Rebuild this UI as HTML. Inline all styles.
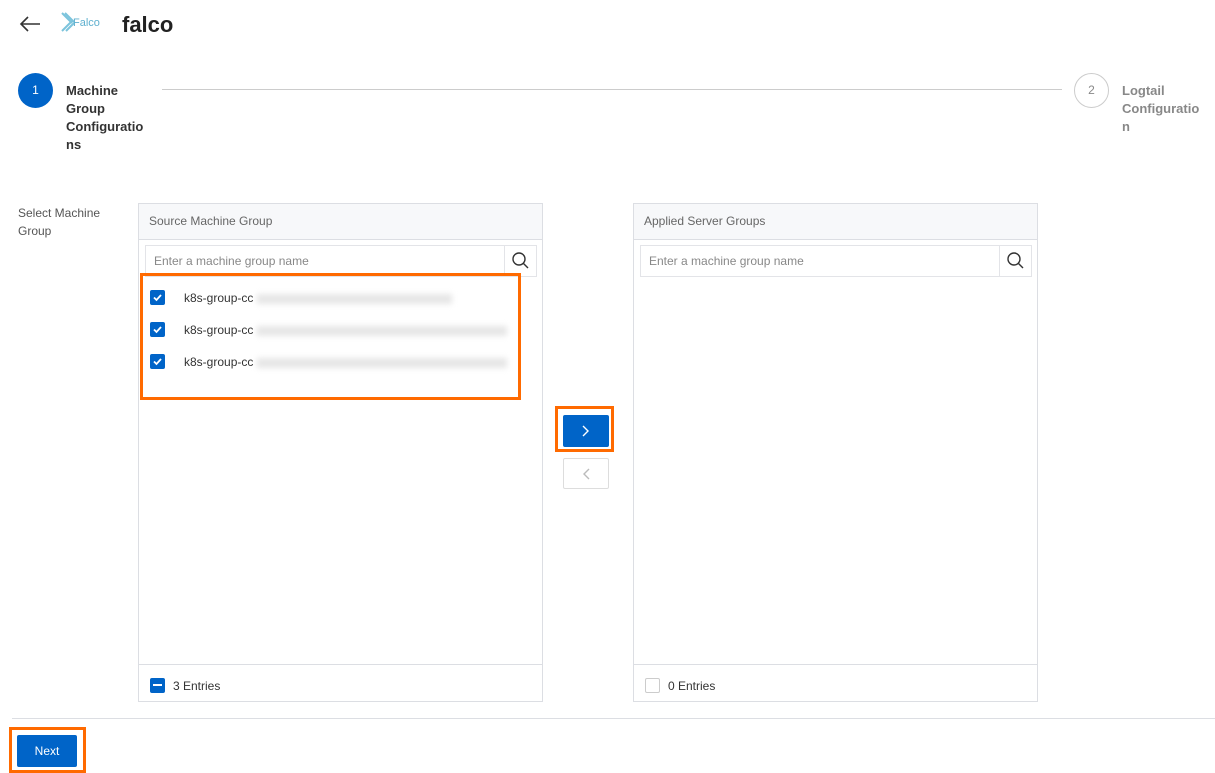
<!DOCTYPE html><html><head><style>
body{margin:0;width:1215px;height:771px;background:#fff;font-family:"Liberation Sans",sans-serif;position:relative;overflow:hidden;color:#333}
.a{position:absolute}
.panel{position:absolute;border:1px solid #dcdee3;box-sizing:border-box;background:#fff}
.hd{height:35px;background:#f7f8fa;border-bottom:1px solid #dcdee3;font-size:12px;color:#666;line-height:35px;padding-left:10px}
.search{position:absolute;left:6px;top:41px;right:5px;height:32px;border:1px solid #e3e4e8;box-sizing:border-box;font-size:12px;color:#888;line-height:30px;padding-left:8px}
.search .ic{position:absolute;right:0;top:0;width:31px;height:30px;border-left:1px solid #e3e4e8}
.cb{position:absolute;width:15px;height:15px;background:#0064c8;border-radius:2px}
.it{position:absolute;font-size:12px;color:#333}
.blur{position:absolute;height:10px;background:#e6e6e6;filter:blur(3px)}
.ft{position:absolute;left:0;right:0;bottom:0;height:36px;border-top:1px solid #dcdee3;font-size:12px;line-height:42px}
.or{position:absolute;border:3px solid #ff6a00;box-sizing:border-box}
</style></head><body>
<svg class="a" style="left:18px;top:14px" width="24" height="20"><path d="M22 10H3M10 3L3 10L10 17" stroke="#333" stroke-width="1.6" fill="none"/></svg>
<svg class="a" style="left:60px;top:11px" width="16" height="22"><path d="M2 2L12 12M5 2L14 11M2 20L12 10M6 20L14 12" stroke="#7cc4dc" stroke-width="2" fill="none"/></svg>
<div class="a" style="left:73px;top:17px;font-size:11px;color:#5fb0cf">Falco</div>
<div class="a" style="left:122px;top:12px;font-size:22px;font-weight:bold;color:#222">falco</div>
<div class="a" style="left:18px;top:73px;width:35px;height:35px;border-radius:50%;background:#0064c8;color:#fff;font-size:12px;text-align:center;line-height:35px">1</div>
<div class="a" style="left:66px;top:82px;font-size:13px;font-weight:bold;line-height:18px;width:90px;color:#333">Machine<br>Group<br>Configuratio<br>ns</div>
<div class="a" style="left:162px;top:89px;width:900px;height:1px;background:#ccc"></div>
<div class="a" style="left:1074px;top:73px;width:33px;height:33px;border-radius:50%;border:1px solid #ccc;color:#888;font-size:12px;text-align:center;line-height:33px">2</div>
<div class="a" style="left:1122px;top:82px;font-size:13px;font-weight:bold;line-height:18px;color:#888">Logtail<br>Configuratio<br>n</div>
<div class="a" style="left:18px;top:204px;font-size:12px;line-height:18px;color:#555">Select Machine<br>Group</div>
<div class="panel" style="left:138px;top:203px;width:405px;height:499px">
<div class="hd">Source Machine Group</div>
<div class="search">Enter a machine group name<div class="ic"><svg width="31" height="30"><circle cx="14" cy="13" r="6" stroke="#333" stroke-width="1.4" fill="none"/><path d="M18.5 17.5L23 22" stroke="#333" stroke-width="1.4"/></svg></div></div>
<div class="cb" style="left:11px;top:86px"><svg width="15" height="15"><path d="M4 7.5L6.5 10L11 5" stroke="#fff" stroke-width="1.8" fill="none"/></svg></div><div class="it" style="left:45px;top:87px">k8s-group-cc</div><div class="blur" style="left:118px;top:90px;width:195px"></div>
<div class="cb" style="left:11px;top:118px"><svg width="15" height="15"><path d="M4 7.5L6.5 10L11 5" stroke="#fff" stroke-width="1.8" fill="none"/></svg></div><div class="it" style="left:45px;top:119px">k8s-group-cc</div><div class="blur" style="left:118px;top:122px;width:250px"></div>
<div class="cb" style="left:11px;top:150px"><svg width="15" height="15"><path d="M4 7.5L6.5 10L11 5" stroke="#fff" stroke-width="1.8" fill="none"/></svg></div><div class="it" style="left:45px;top:151px">k8s-group-cc</div><div class="blur" style="left:118px;top:154px;width:250px"></div>
<div class="ft"><span class="cb" style="left:11px;top:13px"><span style="position:absolute;left:3px;top:6px;width:9px;height:2px;background:#fff"></span></span><span style="position:absolute;left:34px">3 Entries</span></div>
</div>
<div class="or" style="left:140px;top:273px;width:381px;height:127px"></div>
<div class="panel" style="left:633px;top:203px;width:405px;height:499px">
<div class="hd">Applied Server Groups</div>
<div class="search">Enter a machine group name<div class="ic"><svg width="31" height="30"><circle cx="14" cy="13" r="6" stroke="#333" stroke-width="1.4" fill="none"/><path d="M18.5 17.5L23 22" stroke="#333" stroke-width="1.4"/></svg></div></div>
<div class="ft"><span style="position:absolute;left:11px;top:13px;width:15px;height:15px;border:1px solid #ccc;box-sizing:border-box;border-radius:2px"></span><span style="position:absolute;left:34px">0 Entries</span></div>
</div>
<div class="a" style="left:563px;top:415px;width:46px;height:32px;background:#0064c8;border-radius:2px"><svg width="46" height="32"><path d="M20 11L25 16L20 21" stroke="#fff" stroke-width="1.4" fill="none"/></svg></div>
<div class="or" style="left:555px;top:406px;width:59px;height:46px"></div>
<div class="a" style="left:563px;top:458px;width:46px;height:31px;border:1px solid #ddd;box-sizing:border-box;border-radius:2px"><svg width="44" height="29"><path d="M25 10L20 15L25 20" stroke="#bbb" stroke-width="1.4" fill="none"/></svg></div>
<div class="a" style="left:12px;top:718px;width:1203px;height:1px;background:#dcdee3"></div>
<div class="a" style="left:17px;top:735px;width:60px;height:32px;background:#0064c8;color:#fff;font-size:12px;text-align:center;line-height:32px;border-radius:2px">Next</div>
<div class="or" style="left:9px;top:727px;width:77px;height:46px"></div>
</body></html>
